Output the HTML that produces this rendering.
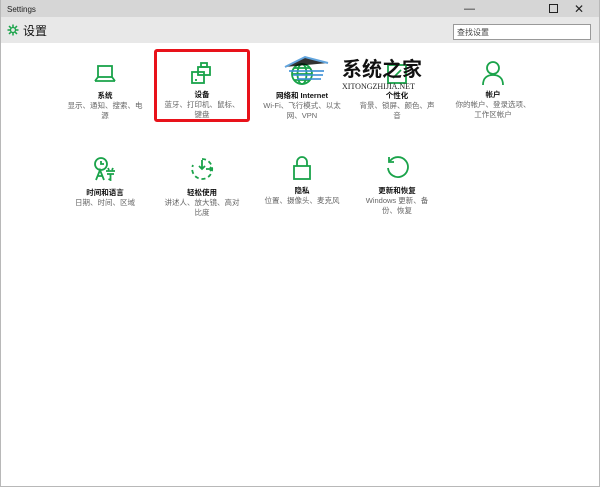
<!DOCTYPE html>
<html><head><meta charset="utf-8"><style>
*{margin:0;padding:0;box-sizing:border-box}
body{width:600px;height:487px;overflow:hidden;font-family:"Liberation Sans","Noto Sans CJK SC",sans-serif;background:#fff;position:relative}
.frame{position:absolute;inset:0;border:1px solid #b8b8b8;border-top:none}
.title{position:absolute;left:0;top:0;width:600px;height:17px;background:#d6d6d6;font-size:8px;color:#222;padding:5px 0 0 7px}
.hdr{position:absolute;left:1px;top:17px;width:598px;height:26px;background:#e8e8e8}
.hdr .t{position:absolute;left:22px;top:5px;font-size:12px;color:#111}
.search{position:absolute;left:452px;top:7px;width:138px;height:16px;border:1px solid #999;background:#fff;font-size:8px;color:#444;padding:2px 3px}
.item{position:absolute;width:90px;text-align:center}
.item svg{display:block;margin:0 auto}
.item svg *{stroke-width:1.8}
.item b{display:block;font-weight:bold;font-size:7.5px;color:#111;margin-top:6px}
.item span{display:block;font-size:7.5px;color:#666;line-height:10px}
.ctl{position:absolute;top:3px;font-size:11px;color:#222}
</style></head><body>
<div class="title">Settings</div>
<div class="ctl" style="left:464px">—</div>
<div class="ctl" style="left:549px;top:4px;width:9px;height:9px;border:1px solid #222"></div>
<div class="ctl" style="left:574px;top:2px;font-size:12px">✕</div>
<div class="hdr">
<svg style="position:absolute;left:6px;top:7px" width="12" height="12" viewBox="0 0 12 12"><circle cx="6" cy="6" r="2.5" fill="none" stroke="#1aa34a" stroke-width="1.3"/><g stroke="#1aa34a" stroke-width="1.5"><path d="M6 0.5v2.5M6 9v2.5M0.5 6h2.5M9 6h2.5M2 2l1.8 1.8M8.2 8.2L10 10M10 2L8.2 3.8M3.8 8.2L2 10"/></g></svg>
<div class="t">设置</div>
<div class="search">查找设置</div>
</div>
<div class="frame"></div>

<div style="position:absolute;left:154px;top:49px;width:96px;height:73px;border:3px solid #e8121a;border-radius:3px"></div>

<div class="item" style="left:60px;top:64px"><svg width="22" height="20" viewBox="0 0 22 20" fill="none" stroke="#1aa34a"><rect x="4" y="2" width="14" height="11"/><path d="M1 17h20"/><path d="M4 13l-3 4M18 13l3 4"/></svg><b>系统</b><span>显示、通知、搜索、电<br>源</span></div>
<div class="item" style="left:157px;top:62px"><svg width="24" height="22" viewBox="0 0 24 22" fill="none" stroke="#1aa34a"><rect x="11" y="1" width="6" height="4"/><rect x="8" y="5" width="12" height="8"/><rect x="2" y="10" width="12" height="11"/><path d="M5 18h2"/></svg><b style="margin-top:5px">设备</b><span>蓝牙、打印机、鼠标、<br>键盘</span></div>
<div class="item" style="left:257px;top:62px"><svg width="24" height="24" viewBox="0 0 24 24" fill="none" stroke="#1aa34a"><circle cx="12" cy="12" r="10"/><ellipse cx="12" cy="12" rx="4.5" ry="10"/><path d="M2 12h20M4 6h16M4 18h16"/></svg><b style="margin-top:4px">网络和 Internet</b><span>Wi-Fi、飞行模式、以太<br>网、VPN</span></div>
<div class="item" style="left:352px;top:62px"><svg width="24" height="24" viewBox="0 0 24 24" fill="none" stroke="#1aa34a"><rect x="3" y="3" width="18" height="18"/><path d="M8 16l8-8"/></svg><b style="margin-top:4px">个性化</b><span>背景、锁屏、颜色、声<br>音</span></div>
<div class="item" style="left:448px;top:61px"><svg width="22" height="25" viewBox="0 0 22 25" fill="none" stroke="#1aa34a"><circle cx="11" cy="7" r="6"/><path d="M1 24c0-7 4-10 10-10s10 3 10 10"/></svg><b style="margin-top:3px">帐户</b><span>你的帐户、登录选项、<br>工作区帐户</span></div>

<div style="position:absolute;left:342px;top:56px;font-size:20px;font-weight:bold;color:#111;font-family:'Noto Sans CJK SC',sans-serif;line-height:24px">系统之家</div>
<div style="position:absolute;left:342px;top:82px;font-size:8px;color:#222;font-family:'Liberation Serif',serif">XITONGZHIJIA.NET</div>
<svg style="position:absolute;left:283px;top:55px" width="60" height="30" viewBox="0 0 60 30"><g stroke="#3b8fd6" stroke-width="2" opacity="0.8"><path d="M2 12L22 2L45 8M6 16h35M10 20h30M14 24h24"/></g></svg>

<div class="item" style="left:60px;top:157px"><svg width="24" height="24" viewBox="0 0 24 24" fill="none" stroke="#1aa34a"><circle cx="8" cy="7" r="6"/><path d="M8 4v3h3"/><path d="M3 23l4-10 4 10M4.5 19h5"/><path d="M13 14h9M15 11l1 2M20 11l-1 2M14 17h7M17.5 17v6l-2-1"/></svg><b>时间和语言</b><span>日期、时间、区域</span></div>
<div class="item" style="left:157px;top:157px"><svg width="24" height="24" viewBox="0 0 24 24" fill="none" stroke="#1aa34a"><path d="M12 2a10 10 0 1 1-9 6" stroke-dasharray="4 3"/><path d="M12 3v9M9 9l3 3 3-3M16 12h6M20 10l2 2-2 2"/></svg><b>轻松使用</b><span>讲述人、放大镜、高对<br>比度</span></div>
<div class="item" style="left:257px;top:155px"><svg width="20" height="26" viewBox="0 0 20 26" fill="none" stroke="#1aa34a"><path d="M5 11V7a5 5 0 0 1 10 0v4"/><rect x="2" y="11" width="16" height="13"/></svg><b style="margin-top:4px">隐私</b><span>位置、摄像头、麦克风</span></div>
<div class="item" style="left:352px;top:156px"><svg width="24" height="24" viewBox="0 0 24 24" fill="none" stroke="#1aa34a"><path d="M5 5a10 10 0 1 1-2 7"/><path d="M4 1v5h5"/></svg><b style="margin-top:5px">更新和恢复</b><span>Windows 更新、备<br>份、恢复</span></div>
</body></html>
